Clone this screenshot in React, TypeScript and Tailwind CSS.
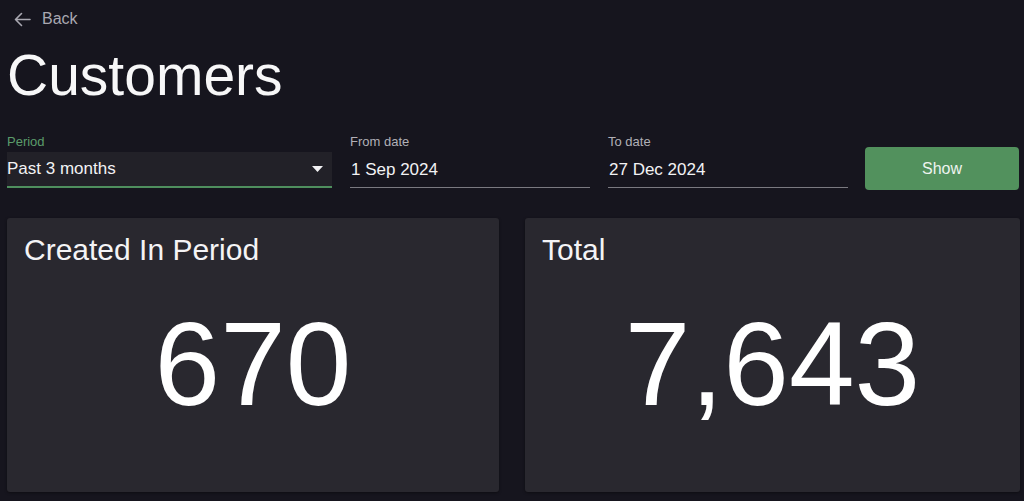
import React from 'react';

const font = { fontFamily: '"Liberation Sans", Arial, sans-serif' };

function DateField({ label, value }: { label: string; value: string }) {
  return (
    <div className="w-[240px] flex flex-col">
      <span className="text-[13px] leading-[16px] text-[#b1b0b7]">{label}</span>
      <div className="mt-[2px] h-[36px] flex items-center border-b border-[#7a7980] text-[17px] text-[#f2f2f4]">
        <span className="pl-px">{value}</span>
      </div>
    </div>
  );
}

function StatCard({ title, value }: { title: string; value: string }) {
  return (
    <div className="h-[274px] bg-[#29282f] rounded-[3px] flex flex-col shadow-[0_1px_3px_rgba(0,0,0,0.4)]">
      <div className="pt-[14px] pl-[17px] text-[30px] leading-[36px] text-[#f4f4f6]">{title}</div>
      <div className="flex-1 flex items-center justify-center pb-[32px]">
        <span className="text-[118px] leading-none text-white">{value}</span>
      </div>
    </div>
  );
}

export default function App() {
  return (
    <div className="min-h-screen bg-[#16151e] pl-[7px] pr-[4px]" style={font}>
      {/* back link */}
      <div className="h-[38px] flex items-center pl-[7px] gap-[11px] text-[16px] text-[#a9a8b1]">
        <svg width="17" height="15" viewBox="0 0 17 15" fill="none" stroke="currentColor" strokeWidth={1.6} strokeLinecap="round" strokeLinejoin="round">
          <path d="M16 7.5H1.5M7.5 1.5L1.5 7.5L7.5 13.5" />
        </svg>
        <span>Back</span>
      </div>

      <h1 className="mt-[8px] text-[57px] leading-[58px] text-[#f7f7f8]">Customers</h1>

      {/* filters */}
      <div className="mt-[30px] flex items-start">
        <div className="w-[325px] flex flex-col">
          <span className="text-[13px] leading-[16px] text-[#5b9c6b]">Period</span>
          <div className="mt-[2px] h-[36px] bg-[#222128] border-b-2 border-[#4f8f5e] flex items-center justify-between pr-[9px] text-[17px] text-[#f2f2f4]">
            <span>Past 3 months</span>
            <svg width="11" height="6" viewBox="0 0 11 6">
              <path d="M0 0H11L5.5 6Z" fill="#f2f2f4" />
            </svg>
          </div>
        </div>
        <div className="ml-[18px]">
          <DateField label="From date" value="1 Sep 2024" />
        </div>
        <div className="ml-[18px]">
          <DateField label="To date" value="27 Dec 2024" />
        </div>
        <button className="ml-[17px] mt-[13px] w-[154px] h-[43px] rounded-[4px] bg-[#52915d] text-[16px] text-[#eef4ef]">
          Show
        </button>
      </div>

      {/* stats */}
      <div className="mt-[28px] grid grid-cols-[492px_1fr] gap-[26px]">
        <StatCard title="Created In Period" value="670" />
        <StatCard title="Total" value="7,643" />
      </div>
    </div>
  );
}
